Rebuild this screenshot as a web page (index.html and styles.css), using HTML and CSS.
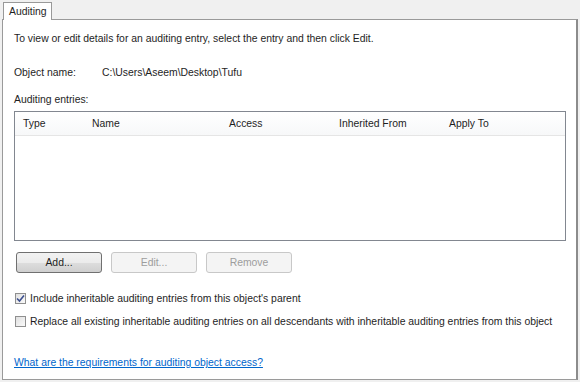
FILE: index.html
```html
<!DOCTYPE html>
<html lang="en">
<head>
  <meta charset="UTF-8" />
  <title>Auditing</title>
  <link rel="stylesheet" href="styles.css">
</head>
<body>
  <div class="tabs">
    <div class="tab">Auditing</div>
  </div>

  <div class="panel">
    <p class="intro">To view or edit details for an auditing entry, select the entry and then click Edit.</p>

    <div class="object-row">
      <span class="object-label">Object name:</span>
      <span>C:\Users\Aseem\Desktop\Tufu</span>
    </div>

    <div class="entries-label">Auditing entries:</div>
    <div class="list">
      <div class="list-head">
        <div class="col col-type">Type</div>
        <div class="col col-name">Name</div>
        <div class="col col-access">Access</div>
        <div class="col col-inherit">Inherited From</div>
        <div class="col col-apply">Apply To</div>
      </div>
    </div>

    <div class="buttons">
      <button class="btn">Add...</button>
      <button class="btn" disabled>Edit...</button>
      <button class="btn" disabled>Remove</button>
    </div>

    <label class="check">
      <span class="box checked">
        <svg viewBox="0 0 9 9" width="9" height="9"><path d="M1 4.5 L3.5 7 L8 1.5" fill="none" stroke="#3c4f8f" stroke-width="1.6"/></svg>
      </span>
      Include inheritable auditing entries from this object's parent
    </label>
    <label class="check second">
      <span class="box"></span>
      Replace all existing inheritable auditing entries on all descendants with inheritable auditing entries from this object
    </label>

    <a class="help" href="#">What are the requirements for auditing object access?</a>
  </div>
</body>
</html>
```

FILE: styles.css
```css
body {
  margin: 0;
  background: #f0f0f0;
  font-family: "Liberation Sans", Arial, sans-serif;
  font-size: 10.4px;
  line-height: 13px;
  color: #1e1e1e;
  width: 580px;
  height: 382px;
  overflow: hidden;
  white-space: nowrap;
}

.tabs {
  height: 19px;
  padding-left: 3px;
  display: flex;
  align-items: flex-end;
}

.tab {
  position: relative;
  top: 1px;
  width: 49px;
  height: 18px;
  line-height: 18px;
  padding-left: 5px;
  box-sizing: border-box;
  background: #fff;
  border: 1px solid #999;
  border-bottom: none;
  z-index: 1;
}

.panel {
  margin: 0 2px 0 2px;
  height: 361px;
  background: #fff;
  border: 1px solid #9a9a9a;
  border-right: 2px solid #8c8c8c;
  padding: 0 11px;
  box-sizing: border-box;
}

.intro {
  margin: 12px 0 0 0;
}

.object-row {
  margin-top: 21px;
  display: flex;
}

.object-label {
  width: 88px;
}

.entries-label {
  margin-top: 14px;
}

.list {
  margin-top: 5px;
  height: 130px;
  border: 1px solid #828790;
  box-sizing: border-box;
  width: 552px;
}

.list-head {
  display: flex;
  height: 24px;
  line-height: 24px;
  box-sizing: border-box;
  border-bottom: 1px solid #e5e5e5;
  background: linear-gradient(#fff, #f7f8f9);
}

.col {
  padding-left: 8px;
  box-sizing: border-box;
}

.col-type { width: 69px; }
.col-name { width: 137px; }
.col-access { width: 110px; }
.col-inherit { width: 110px; }
.col-apply { flex: 1; }

.buttons {
  display: flex;
  gap: 9px;
  margin-top: 11px;
  padding-left: 2px;
}

.btn {
  width: 86px;
  height: 21px;
  font-family: inherit;
  font-size: 10.4px;
  color: #1e1e1e;
  border: 1px solid #707070;
  border-radius: 3px;
  background: linear-gradient(#f2f2f2 0%, #ebebeb 50%, #dddddd 51%, #cfcfcf 100%);
  padding: 0;
}

.btn:disabled {
  color: #9d9d9d;
  border-color: #c8c8c8;
  background: #f4f4f4;
}

.check {
  display: flex;
  align-items: center;
  gap: 4px;
  margin-top: 19px;
  padding-left: 1px;
}

.check.second {
  margin-top: 10px;
}

.box {
  width: 11px;
  height: 11px;
  border: 1px solid #8f8f8f;
  box-sizing: border-box;
  background: linear-gradient(135deg, #e0e0e0, #fafafa);
  display: flex;
  align-items: center;
  justify-content: center;
}

.help {
  display: block;
  margin-top: 28px;
  color: #0066cc;
}
```
